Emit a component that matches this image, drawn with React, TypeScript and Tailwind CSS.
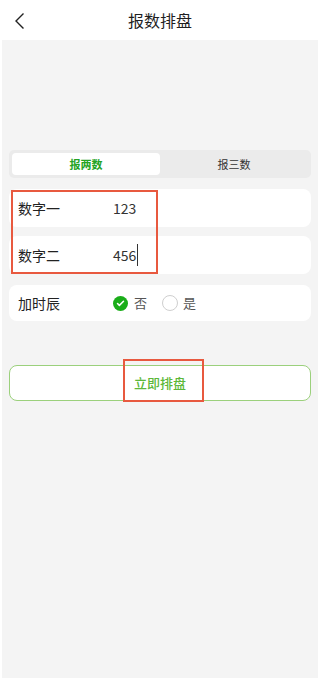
import { Check } from "lucide-react";

export default function App() {
  return (
    <div
      className="relative flex h-[680px] w-[320px] flex-col bg-white"
      style={{ fontFamily: '"Noto Sans CJK SC", "Noto Sans", sans-serif' }}
    >
      {/* Header */}
      <div className="relative flex h-[40px] shrink-0 items-center justify-center">
        <svg
          className="absolute left-[13px] top-[12px]"
          width="14"
          height="18"
          viewBox="0 0 14 18"
          fill="none"
        >
          <path d="M10.5 1.5 3 9l7.5 7.5" stroke="#222" strokeWidth="1.4" />
        </svg>
        <h1 className="text-[16px] text-[#1f1f1f]">报数排盘</h1>
      </div>

      {/* Body */}
      <div className="mx-[2px] mb-[2px] flex flex-1 flex-col bg-[#f4f4f4] px-[7px] pt-[110px]">
        {/* Tabs */}
        <div className="flex h-[28px] rounded-[5px] bg-[#ebebeb] p-[3px]">
          <div className="flex flex-1 items-center justify-center rounded-[4px] bg-white text-[11px] font-bold text-[#23a323]">
            报两数
          </div>
          <div className="flex flex-1 items-center justify-center text-[11px] text-[#333]">
            报三数
          </div>
        </div>

        <div className="mt-[11px] flex h-[38px] items-center rounded-[8px] bg-white px-[9px]">
          <span className="w-[95px] text-[14px] text-[#222]">数字一</span>
          <span className="text-[14px] text-[#333]">123</span>
        </div>
        <div className="mt-[9px] flex h-[38px] items-center rounded-[8px] bg-white px-[9px]">
          <span className="w-[95px] text-[14px] text-[#222]">数字二</span>
          <span className="text-[14px] text-[#333]">456</span>
          <span className="ml-[1px] h-[22px] w-[1px] bg-[#333]" />
        </div>
        <div className="mt-[11px] flex h-[36px] items-center rounded-[8px] bg-white px-[9px]">
          <span className="w-[95px] text-[14px] text-[#222]">加时辰</span>
          <div className="flex items-center gap-[6px]">
            <span className="flex h-[15px] w-[15px] items-center justify-center rounded-full bg-[#1aad19]">
              <Check className="h-[9px] w-[9px] text-white" strokeWidth={4} />
            </span>
            <span className="text-[13px] text-[#555]">否</span>
          </div>
          <div className="ml-[15px] flex items-center gap-[5px]">
            <span className="h-[16px] w-[16px] rounded-full border border-[#cfcfcf] bg-white" />
            <span className="text-[13px] text-[#555]">是</span>
          </div>
        </div>

        <button className="mt-[44px] flex h-[36px] items-center justify-center rounded-[8px] border border-[#9bd07c] bg-white text-[13px] font-medium text-[#5db83a]">
          立即排盘
        </button>
      </div>

      {/* Annotations */}
      <div className="pointer-events-none absolute left-[11px] top-[190px] h-[84px] w-[147px] border-2 border-[#e8593f]" />
      <div className="pointer-events-none absolute left-[123px] top-[359px] h-[43px] w-[81px] border-2 border-[#e8593f]" />
    </div>
  );
}
